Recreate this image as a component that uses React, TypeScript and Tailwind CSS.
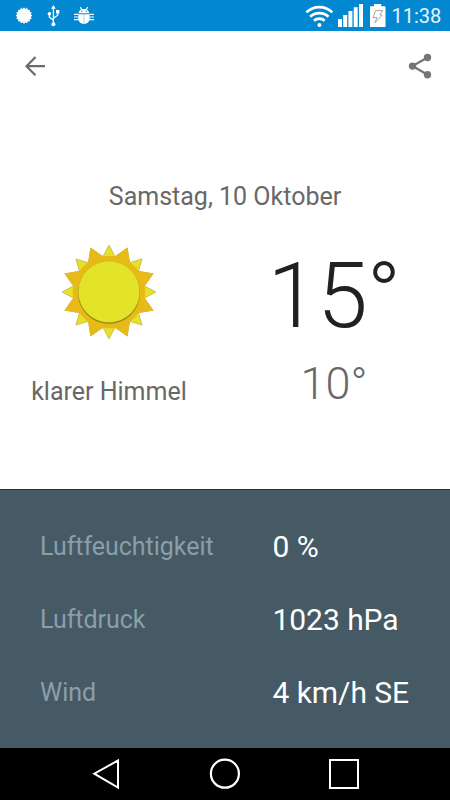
const details = [
  { label: "Luftfeuchtigkeit", value: "0 %" },
  { label: "Luftdruck", value: "1023 hPa" },
  { label: "Wind", value: "4 km/h SE" },
];

function point(radius: number, degrees: number) {
  const a = (degrees * Math.PI) / 180;
  return `${(Math.sin(a) * radius).toFixed(2)},${(-Math.cos(a) * radius).toFixed(2)}`;
}

// eight orange rays, with eight smaller yellow ones behind them
const orangeRays = Array.from({ length: 8 }, (_, i) => {
  const a = 22.5 + i * 45;
  return [point(36.2, a - 12.8), point(48.3, a), point(36.2, a + 12.8)].join(" ");
}).join(" ");
const yellowRays = Array.from({ length: 8 }, (_, i) => {
  const a = i * 45;
  return [point(35, a - 11), point(46.8, a), point(35, a + 11)].join(" ");
}).join(" ");
const smallSun = Array.from({ length: 32 }, (_, i) =>
  point(i % 2 ? 6.8 : 8.4, i * 11.25)
).join(" ");

function Sun() {
  return (
    <svg className="h-[100px] w-[100px] drop-shadow-[0_0.5px_0.5px_rgba(0,0,0,0.4)]" viewBox="-50 -50 100 100">
      <polygon points={yellowRays} fill="#e6e028" stroke="#c4b727" strokeWidth="0.4" />
      <polygon points={orangeRays} fill="#e8ba18" />
      <circle r="36.2" fill="#e8ba18" />
      <circle cy="0.8" r="31" fill="#8d8115" />
      <circle cy="-0.2" r="30.8" fill="#e3e327" stroke="#b6a91c" strokeWidth="0.4" />
    </svg>
  );
}

function StatusBar() {
  return (
    <div className="flex h-[31px] justify-between bg-[#0288d1]">
      <svg className="h-[31px] w-[100px]" viewBox="0 0 100 31" fill="#fff">
        <polygon points={smallSun} transform="translate(24 15.6)" />
        <g stroke="#fff" strokeWidth="1.3" fill="none">
          <path d="M53.4 8v16M53.4 20.2l-4-3v-3.4M53.4 18.2l4.3-3v-3" />
        </g>
        <path d="M53.4 5l2.3 3.8h-4.6z" />
        <circle cx="53.4" cy="24.2" r="2" />
        <circle cx="49.4" cy="13.8" r="1.8" />
        <rect x="56" y="10" width="3.4" height="3.4" />
        <path d="M78.7 13.2c0-2.7 2.2-4.3 5.2-4.3s5.2 1.6 5.2 4.3z" />
        <path d="M78.3 14.2h11.3v4.3c0 3.2-2.3 5.4-5.6 5.4s-5.7-2.2-5.7-5.4z" />
        <path d="M80.2 7.2l1.7 2.6M87.7 7.2L86 9.8M74 14.4h4.5M74 17h4.5M74 19.6h5M89.4 14.4h4.5M89.4 17h4.5M89 19.6h5" stroke="#fff" strokeWidth="1.2" />
        <path d="M84 14.3v9.5" stroke="#a8d3ed" strokeWidth="1" />
        <circle cx="81.8" cy="11.3" r="0.7" fill="#0288d1" />
        <circle cx="86.2" cy="11.3" r="0.7" fill="#0288d1" />
      </svg>
      <div className="flex pr-[9px]">
        <svg className="h-[31px] w-[90px]" viewBox="300 0 90 31" fill="#fff">
          <g fill="none" stroke="#fff" strokeWidth="2.7">
            <path d="M306.4 12.4c7.2-7 18.7-7 25.9 0" />
            <path d="M310.2 16.7c5.1-4.9 13.2-4.9 18.3 0" />
            <path d="M314 20.8c3-2.8 7.7-2.8 10.7 0" />
          </g>
          <circle cx="319.4" cy="25.1" r="2" />
          <path d="M338 19h4v8h-4zM343.2 15h4v12h-4zM348.4 11h4v16h-4zM353.7 7.3h4V27h-4zM359 4h4v23h-4z" />
          <path d="M374 4h7.2v2.2h4.3V27H370V6.2h4z" />
          <path d="M375.5 10.7l7-.3-2.6 4.6 2.3.1-7.2 7.6 1.9-5.3-3.9.3z" fill="none" stroke="#8d9296" strokeWidth="0.8" />
        </svg>
        <span className="w-[51px] whitespace-nowrap pl-[1.5px] text-[20px] leading-[33px] text-[#e8f4fb]">11:38</span>
      </div>
    </div>
  );
}

function Toolbar() {
  return (
    <div className="flex h-[70px] items-center justify-between pl-[22px] pr-[17px]">
      <svg className="h-[26px] w-[26px]" viewBox="0 0 26 26" fill="none" stroke="#6b6b6b" strokeWidth="2.2">
        <path d="M23 13.2H5M13.5 3.9L4.5 13.2l9 9.1" />
      </svg>
      <svg className="h-[28px] w-[26px]" viewBox="0 0 26 28" fill="#757575">
        <path d="M20.5 5.5L5.5 14l15 8.7" fill="none" stroke="#757575" strokeWidth="2.2" />
        <circle cx="20.5" cy="5.5" r="3.7" />
        <circle cx="5.5" cy="14.1" r="3.7" />
        <circle cx="20.5" cy="22.8" r="3.7" />
      </svg>
    </div>
  );
}

function NavBar() {
  return (
    <div className="flex h-[52px] items-center justify-between bg-black px-[90px]">
      <svg className="h-8 w-8" viewBox="0 0 32 32" fill="none" stroke="#fff" strokeWidth="2">
        <path d="M28 2.5v27L4.3 15.7z" />
      </svg>
      <svg className="h-8 w-8" viewBox="0 0 32 32" fill="none" stroke="#fff" strokeWidth="2.2">
        <circle cx="15.9" cy="15.7" r="14" />
      </svg>
      <svg className="h-8 w-8" viewBox="0 0 32 32" fill="none" stroke="#fff" strokeWidth="2">
        <path d="M2 2h28v28H2z" />
      </svg>
    </div>
  );
}

export default function App() {
  return (
    <div className="flex h-[800px] w-[450px] flex-col overflow-hidden bg-white font-[Roboto,sans-serif]">
      <StatusBar />
      <Toolbar />
      <div className="flex h-[388px] flex-col pt-[81px]">
        <p className="text-center text-[25px] leading-[30px] text-[#686868]">Samstag, 10 Oktober</p>
        <div className="flex pt-[30px]">
          <div className="flex w-[218px] shrink-0 flex-col items-center">
            <Sun />
            <p className="pt-[35px] text-[25px] leading-[30px] text-[#686868]">klarer Himmel</p>
          </div>
          <div className="flex w-[232px] shrink-0 flex-col items-center pt-1">
            <p className="text-[91px] font-light leading-[100px] tracking-[-0.8px] text-[#212121]">15°</p>
            <p className="pt-[13px] text-[45px] font-light leading-[50px] text-[#686868]">10°</p>
          </div>
        </div>
      </div>
      <div className="flex h-[259px] flex-col border-t border-[#173b4b] bg-[#455a64] pt-5">
        {details.map((item) => (
          <div key={item.label} className="flex h-[73px] items-center pl-10">
            <span className="w-[232.5px] text-[25px] tracking-[-0.03px] text-[#8a9fa9]">{item.label}</span>
            <span className="text-[30px] tracking-[-0.05px] text-white">{item.value}</span>
          </div>
        ))}
      </div>
      <NavBar />
    </div>
  );
}
